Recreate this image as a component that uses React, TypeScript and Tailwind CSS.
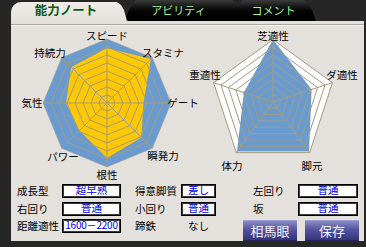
import React from "react";

const FONT = '"Noto Sans CJK JP", "Noto Sans", sans-serif';

type Label = { text: string; x: number; y: number };

const point = (cx: number, cy: number, r: number, i: number, n: number) => {
  const a = -Math.PI / 2 + (2 * Math.PI * i) / n;
  return [cx + r * Math.cos(a), cy + r * Math.sin(a)];
};

const ring = (cx: number, cy: number, r: number, n: number, vals?: number[]) =>
  Array.from({ length: n }, (_, i) => point(cx, cy, r * (vals ? vals[i] : 1), i, n))
    .map(([x, y]) => `${x.toFixed(1)},${y.toFixed(1)}`)
    .join(" ");

const Radar = ({
  w,
  h,
  cx,
  cy,
  R,
  n,
  values,
  back,
  fill,
  labels,
  outline,
}: {
  w: number;
  h: number;
  cx: number;
  cy: number;
  R: number;
  n: number;
  values: number[];
  back: string;
  fill: string;
  labels: Label[];
  outline?: boolean;
}) => (
  <svg width={w} height={h} className="overflow-visible shrink-0">
    <polygon points={ring(cx, cy, R, n)} fill={back} />
    <polygon points={ring(cx, cy, R, n, values)} fill={fill} />
    {Array.from({ length: 8 }, (_, k) => (
      <polygon
        key={k}
        points={ring(cx, cy, (R * (k + 1)) / 8, n)}
        fill="none"
        stroke="#a39c7e"
        strokeWidth={1}
        opacity={k === 7 && !outline ? 0.5 : 1}
      />
    ))}
    {Array.from({ length: n }, (_, i) => {
      const [x, y] = point(cx, cy, R, i, n);
      return <line key={i} x1={cx} y1={cy} x2={x} y2={y} stroke="#a39c7e" strokeWidth={1} />;
    })}
    {labels.map((l) => (
      <text
        key={l.text}
        x={l.x}
        y={l.y}
        textAnchor="middle"
        dominantBaseline="central"
        fontSize={10.5}
        fontFamily={FONT}
        fill="#000"
      >
        {l.text}
      </text>
    ))}
  </svg>
);

const Box = ({ w, children }: { w: string; children: React.ReactNode }) => (
  <div
    className={`${w} h-[14px] bg-white border border-black shadow-[inset_0_0_0_1px_#3a3a3a] flex items-center justify-center whitespace-nowrap text-[10.5px] leading-none text-[#0000ee]`}
  >
    <span className="-translate-y-px">{children}</span>
  </div>
);

const Btn = ({ children }: { children: React.ReactNode }) => (
  <div className="w-[54px] h-[20px] flex items-center justify-center text-[13px] leading-none text-[#f2f2ff] bg-gradient-to-b from-[#8a8ac4] via-[#50509a] to-[#34347a] border-t border-[#a0a0d8] shadow-[0_1px_0_#24245a]">
    {children}
  </div>
);

const Label = ({ w, ml, children }: { w: string; ml?: string; children: React.ReactNode }) => (
  <div className={`${w} ${ml ?? ""} h-[14px] whitespace-nowrap text-[10.5px] leading-none text-black flex items-center`}>
    {children}
  </div>
);

export default function App() {
  return (
    <div className="w-[366px] h-[247px] bg-[#262626] overflow-hidden" style={{ fontFamily: FONT }}>
      {/* tabs */}
      <div className="h-[21px] pl-[11px] pt-[2px] flex items-end">
        <div className="relative z-10 w-[116px] h-[19px] rounded-tl-[10px] bg-gradient-to-b from-[#f0ece8] to-[#e4e0dc] [clip-path:polygon(0_100%,0_0,calc(100%-10px)_0,calc(100%-6px)_3px,calc(100%-3px)_8px,100%_100%)] flex items-center justify-center pb-[2px] pr-[6px] text-[12.5px] font-bold text-[#0c5a12]">
          能力ノート
        </div>
        <div className="-ml-[3px] w-[119px] h-[21px] bg-gradient-to-b from-[#3c3c3c] via-[#060606] to-black [clip-path:polygon(0_100%,6px_8px,9px_3px,12px_0,calc(100%-11px)_0,calc(100%-8px)_3px,calc(100%-5px)_8px,100%_100%)] flex items-center justify-center pr-[10px] pb-[1px] text-[11px] text-[#a6f59a]">
          アビリティ
        </div>
        <div className="-ml-[12px] w-[85px] h-[21px] bg-gradient-to-b from-[#3c3c3c] via-[#060606] to-black [clip-path:polygon(0_100%,6px_8px,9px_3px,12px_0,calc(100%-12px)_0,calc(100%-8px)_3px,calc(100%-4px)_10px,100%_100%)] flex items-center justify-center pb-[1px] text-[11px] text-[#a6f59a]">
          コメント
        </div>
      </div>

      {/* panel */}
      <div className="ml-[11px] w-[353px] h-[220px] bg-[#e4e0dc] flex flex-col">
        <div className="h-[3px]" />
        <div className="h-px bg-[#aaa6a0]" />
        <div className="h-px bg-[#f6f4f2]" />

        <div className="h-[158px] flex">
          <Radar
            w={176}
            h={158}
            cx={96}
            cy={77}
            R={64}
            n={8}
            values={[0.86, 0.97, 0.57, 0.76, 0.86, 0.61, 0.64, 0.79]}
            back="#6a9bd0"
            fill="#ffc800"
            labels={[
              { text: "スピード", x: 96, y: 9 },
              { text: "スタミナ", x: 152, y: 26 },
              { text: "ゲート", x: 172, y: 76 },
              { text: "瞬発力", x: 152, y: 129 },
              { text: "根性", x: 96, y: 148 },
              { text: "パワー", x: 52, y: 130 },
              { text: "気性", x: 21, y: 76 },
              { text: "持続力", x: 39, y: 26 },
            ]}
          />
          <Radar
            w={177}
            h={158}
            cx={86}
            cy={76}
            R={62.5}
            n={5}
            values={[1, 0.65, 0.98, 0.98, 0.49]}
            back="#ffffff"
            fill="#6a9bd0"
            outline
            labels={[
              { text: "芝適性", x: 86, y: 9 },
              { text: "ダ適性", x: 155, y: 48 },
              { text: "脚元", x: 125, y: 139 },
              { text: "体力", x: 45, y: 139 },
              { text: "重適性", x: 18, y: 48 },
            ]}
          />
        </div>

        <div className="flex pl-[6px]">
          <Label w="w-[45px]">成長型</Label>
          <Box w="w-[59px]">超早熟</Box>
          <Label w="w-[46px]" ml="ml-[14px]">得意脚質</Label>
          <Box w="w-[35px]">差し</Box>
          <Label w="w-[45px]" ml="ml-[37px]">左回り</Label>
          <Box w="w-[60px]">普通</Box>
        </div>
        <div className="mt-[4px] flex pl-[6px]">
          <Label w="w-[45px]">右回り</Label>
          <Box w="w-[59px]">普通</Box>
          <Label w="w-[46px]" ml="ml-[14px]">小回り</Label>
          <Box w="w-[35px]">普通</Box>
          <Label w="w-[45px]" ml="ml-[37px]">坂</Label>
          <Box w="w-[60px]">普通</Box>
        </div>
        <div className="mt-[3px] flex items-start pl-[6px]">
          <Label w="w-[45px]">距離適性</Label>
          <Box w="w-[59px]">
            <span className="text-[10px] tracking-[-0.2px]">1600－2200</span>
          </Box>
          <Label w="w-[46px]" ml="ml-[14px]">蹄鉄</Label>
          <Label w="w-[35px]">
            <span className="w-full text-center">なし</span>
          </Label>
          <div className="ml-[27px] mt-[1px] flex gap-[8px]">
            <Btn>相馬眼</Btn>
            <Btn>保存</Btn>
          </div>
        </div>
      </div>
    </div>
  );
}
